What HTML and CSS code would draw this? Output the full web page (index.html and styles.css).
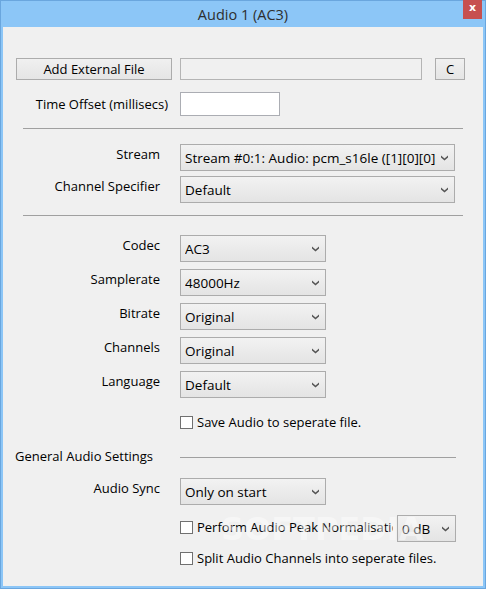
FILE: index.html
```html
<!DOCTYPE html>
<html>
<head>
<meta charset="utf-8">
<title>Audio 1 (AC3)</title>
<link rel="stylesheet" href="styles.css">
</head>
<body>
<div class="window">
  <div class="titlebar">
    <span class="title">Audio 1 (AC3)</span>
    <div class="close">x</div>
  </div>
  <div class="client">
    <div class="row-file">
      <div class="btn btn-add">Add External File</div>
      <div class="field field-file"></div>
      <div class="btn btn-c">C</div>
    </div>
    <div class="row-offset">
      <div class="label label-offset">Time Offset (millisecs)</div>
      <div class="field field-offset"></div>
    </div>
    <div class="sep"></div>
    <div class="form form-stream">
      <div class="label">Stream</div>
      <div class="combo combo-wide"><span class="combo-text">Stream #0:1: Audio: pcm_s16le ([1][0][0][0] / 0x0001)</span><svg class="arrow" width="7" height="6" viewBox="0 0 7 6"><path d="M0 0.5 L3.5 3.5 L7 0.5 L7 2.5 L3.5 5.5 L0 2.5 Z" fill="#555"/></svg></div>
      <div class="label">Channel Specifier</div>
      <div class="combo combo-wide"><span class="combo-text">Default</span><svg class="arrow" width="7" height="6" viewBox="0 0 7 6"><path d="M0 0.5 L3.5 3.5 L7 0.5 L7 2.5 L3.5 5.5 L0 2.5 Z" fill="#555"/></svg></div>
    </div>
    <div class="sep sep2"></div>
    <div class="form form-codec">
      <div class="label">Codec</div>
      <div class="combo combo-mid"><span class="combo-text">AC3</span><svg class="arrow" width="7" height="6" viewBox="0 0 7 6"><path d="M0 0.5 L3.5 3.5 L7 0.5 L7 2.5 L3.5 5.5 L0 2.5 Z" fill="#555"/></svg></div>
      <div class="label">Samplerate</div>
      <div class="combo combo-mid"><span class="combo-text">48000Hz</span><svg class="arrow" width="7" height="6" viewBox="0 0 7 6"><path d="M0 0.5 L3.5 3.5 L7 0.5 L7 2.5 L3.5 5.5 L0 2.5 Z" fill="#555"/></svg></div>
      <div class="label">Bitrate</div>
      <div class="combo combo-mid"><span class="combo-text">Original</span><svg class="arrow" width="7" height="6" viewBox="0 0 7 6"><path d="M0 0.5 L3.5 3.5 L7 0.5 L7 2.5 L3.5 5.5 L0 2.5 Z" fill="#555"/></svg></div>
      <div class="label">Channels</div>
      <div class="combo combo-mid"><span class="combo-text">Original</span><svg class="arrow" width="7" height="6" viewBox="0 0 7 6"><path d="M0 0.5 L3.5 3.5 L7 0.5 L7 2.5 L3.5 5.5 L0 2.5 Z" fill="#555"/></svg></div>
      <div class="label">Language</div>
      <div class="combo combo-mid"><span class="combo-text">Default</span><svg class="arrow" width="7" height="6" viewBox="0 0 7 6"><path d="M0 0.5 L3.5 3.5 L7 0.5 L7 2.5 L3.5 5.5 L0 2.5 Z" fill="#555"/></svg></div>
    </div>
    <div class="check check-save"><span class="box"></span><span class="check-text">Save Audio to seperate file.</span></div>
    <div class="group-head">
      <span class="group-title">General Audio Settings</span>
      <span class="group-line"></span>
    </div>
    <div class="form form-sync">
      <div class="label">Audio Sync</div>
      <div class="combo combo-mid"><span class="combo-text">Only on start</span><svg class="arrow" width="7" height="6" viewBox="0 0 7 6"><path d="M0 0.5 L3.5 3.5 L7 0.5 L7 2.5 L3.5 5.5 L0 2.5 Z" fill="#555"/></svg></div>
    </div>
    <div class="row-norm">
      <div class="check check-norm"><span class="box"></span><span class="check-text clip">Perform Audio Peak Normalisation</span></div>
      <div class="combo combo-db"><span class="combo-text">0 dB</span><svg class="arrow" width="7" height="6" viewBox="0 0 7 6"><path d="M0 0.5 L3.5 3.5 L7 0.5 L7 2.5 L3.5 5.5 L0 2.5 Z" fill="#555"/></svg></div>
    </div>
    <div class="check check-split"><span class="box"></span><span class="check-text">Split Audio Channels into seperate files.</span></div>
    <div class="watermark">SOFTPEDIA</div>
  </div>
</div>
</body>
</html>
```
FILE: styles.css
```css
html, body {
  margin: 0;
  padding: 0;
}
body {
  width: 486px;
  height: 589px;
  overflow: hidden;
  font-family: "Open Sans", "Noto Sans", sans-serif;
  font-size: 13px;
  color: #000;
}
.window {
  box-sizing: border-box;
  width: 486px;
  height: 589px;
  background: #8cc6f7;
  border: 1px solid #6aa6de;
  display: flex;
  flex-direction: column;
  padding: 0 2px 2px 2px;
}
.titlebar {
  height: 26px;
  flex: none;
  display: flex;
  justify-content: center;
  align-items: center;
  position: relative;
}
.title {
  font-size: 14.5px;
  color: #2e2e2e;
  margin-top: 1px;
}
.close {
  position: absolute;
  top: -1px;
  right: 1px;
  width: 19px;
  height: 19px;
  background: #c75050;
  color: #fff;
  font-family: "DejaVu Sans", sans-serif;
  font-weight: bold;
  font-size: 11px;
  line-height: 16px;
  text-align: center;
}
.client {
  flex: 1;
  background: #f0f0f0;
  position: relative;
  overflow: hidden;
}
.btn {
  box-sizing: border-box;
  height: 22px;
  border: 1px solid #acacac;
  background: linear-gradient(#f0f0f0, #e5e5e5);
  display: flex;
  align-items: center;
  justify-content: center;
  font-size: 13px;
}
.field {
  box-sizing: border-box;
  border: 1px solid #abadb3;
}
.row-file {
  display: flex;
  margin-top: 31px;
  height: 22px;
}
.btn-add {
  margin-left: 13px;
  width: 156px;
}
.field-file {
  margin-left: 8px;
  width: 242px;
  height: 22px;
  background: #f0f0f0;
  border-color: #b4b4b4;
}
.btn-c {
  margin-left: 13px;
  width: 30px;
}
.row-offset {
  display: flex;
  align-items: center;
  margin-top: 12px;
}
.label-offset {
  width: 165px;
  text-align: right;
}
.field-offset {
  margin-left: 12px;
  width: 100px;
  height: 24px;
  background: #fff;
}
.sep {
  height: 1px;
  background: #a0a0a0;
  margin: 12px 20px 0 20px;
}
.sep2 {
  margin-top: 12px;
}
.form {
  display: grid;
  grid-template-columns: 157px auto;
  column-gap: 20px;
  justify-content: start;
  align-items: start;
}
.form .label {
  text-align: right;
  line-height: 20px;
}
.form-stream {
  margin-top: 15px;
  row-gap: 5px;
}
.form-codec {
  margin-top: 19px;
  row-gap: 7px;
}
.form-sync {
  margin-top: 12px;
}
.combo {
  box-sizing: border-box;
  height: 27px;
  border: 1px solid #acacac;
  background: linear-gradient(#f2f2f2, #e4e4e4);
  display: flex;
  align-items: center;
  padding: 1px 6px 0 4px;
  font-size: 13.5px;
}
.combo-text {
  flex: 1;
  white-space: nowrap;
  overflow: hidden;
}
.arrow {
  flex: none;
  margin-left: 5px;
}
.combo-wide {
  width: 275px;
}
.combo-mid {
  width: 146px;
}
.combo-db {
  width: 59px;
  margin-left: 4px;
}
.check {
  display: flex;
  align-items: center;
  height: 20px;
  padding-left: 177px;
}
.box {
  box-sizing: border-box;
  width: 13px;
  height: 13px;
  border: 1px solid #707070;
  background: #fff;
  flex: none;
  margin-right: 4px;
}
.check-save {
  margin-top: 14px;
}
.group-head {
  display: flex;
  align-items: center;
  height: 20px;
  margin-top: 14px;
}
.group-title {
  width: 177px;
  padding-left: 12px;
  box-sizing: border-box;
  white-space: nowrap;
}
.group-line {
  width: 276px;
  height: 1px;
  background: #a0a0a0;
  margin-top: 3px;
}
.row-norm {
  display: flex;
  align-items: center;
  margin-top: 10px;
}
.check-norm {
  width: 390px;
  box-sizing: border-box;
  margin-top: -3px;
}
.clip {
  white-space: nowrap;
  overflow: hidden;
}
.check-split {
  margin-top: 6px;
}
.watermark {
  position: absolute;
  left: 218px;
  top: 483px;
  font-family: "DejaVu Sans", sans-serif;
  font-weight: bold;
  font-size: 32px;
  color: rgba(255, 255, 255, 0.45);
  pointer-events: none;
}
```
